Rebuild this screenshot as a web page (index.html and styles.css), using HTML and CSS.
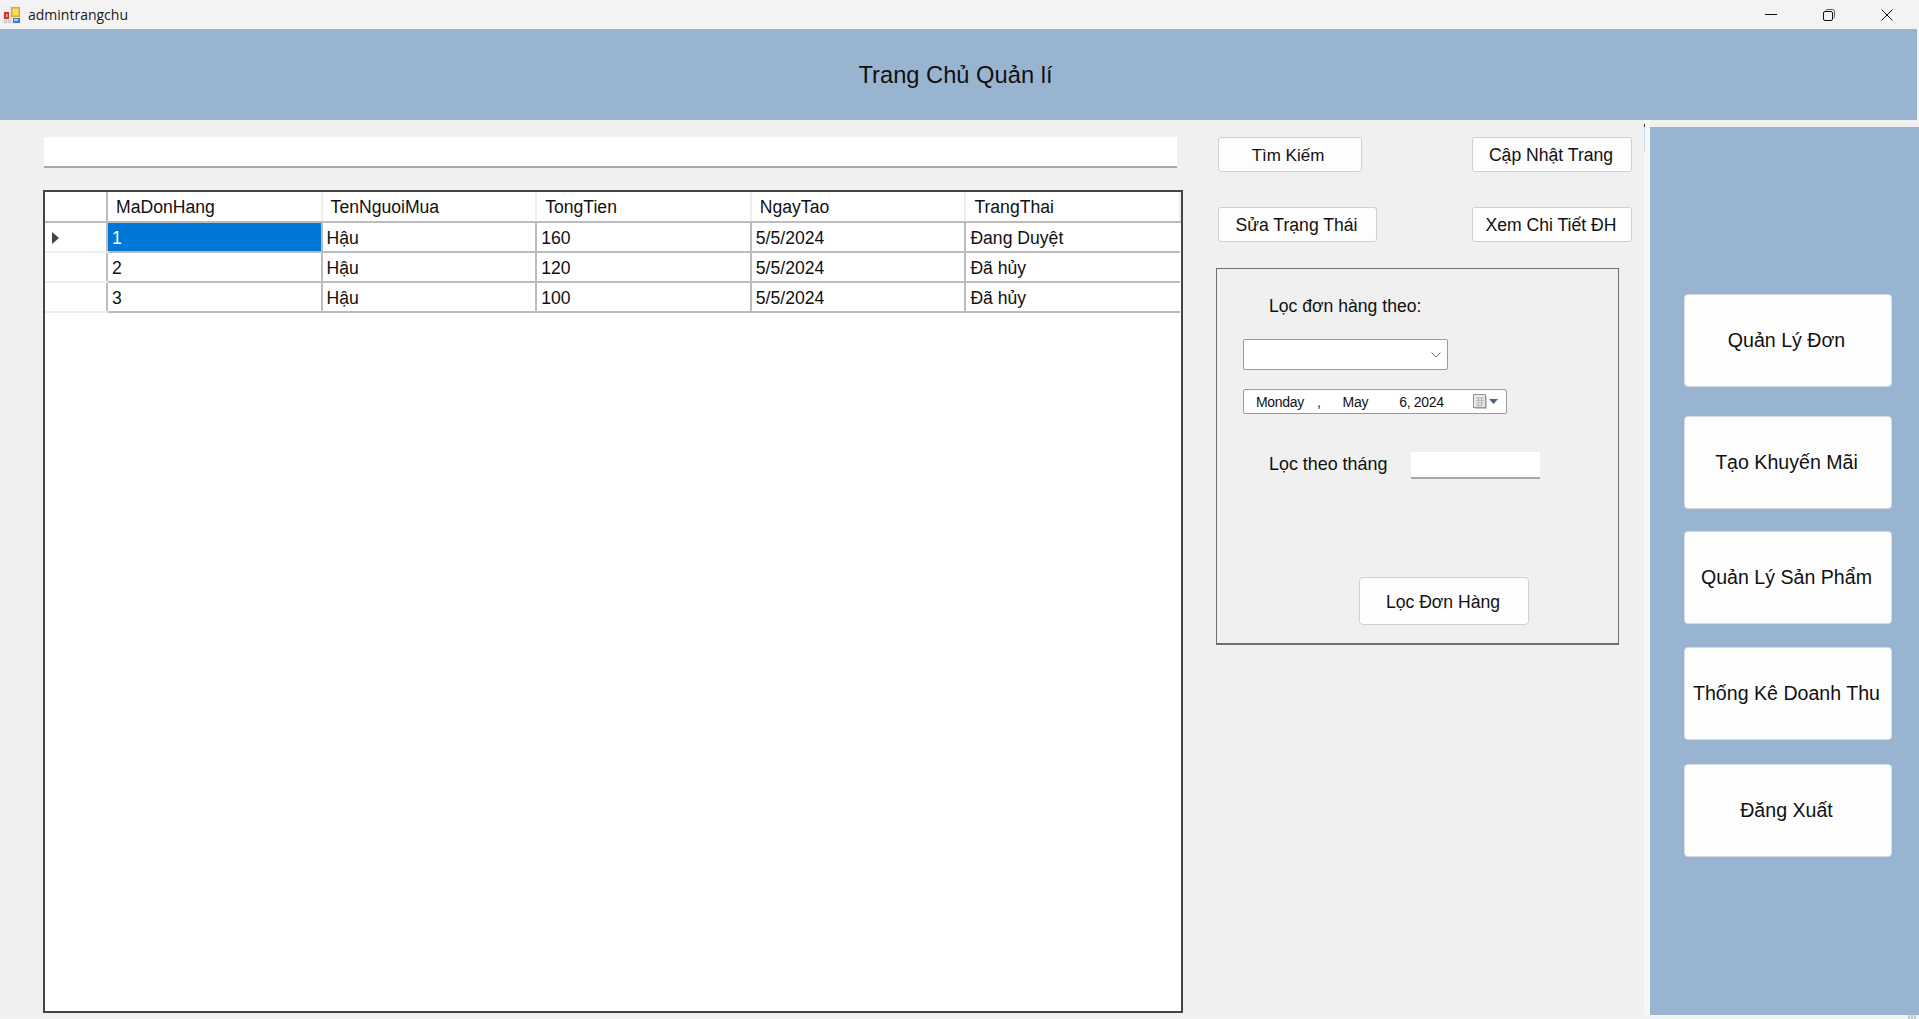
FILE: index.html
```html
<!DOCTYPE html>
<html lang="vi">
<head>
  <meta charset="UTF-8">
  <title>admintrangchu</title>
  <link rel="stylesheet" href="styles.css">
</head>
<body>

  <div class="titlebar">
    <svg class="app-icon" width="18" height="18" viewBox="0 0 18 18">
      <rect x="0.5" y="0.5" width="17" height="17" fill="#e4e4e4"/>
      <rect x="1" y="1" width="5" height="4" fill="#f4f4f4"/>
      <rect x="1" y="6" width="5" height="7" fill="#c9352c"/>
      <rect x="3" y="8" width="1.5" height="3" fill="#f6b0a8"/>
      <rect x="8" y="1" width="9" height="10" fill="#e9ac1c"/>
      <rect x="9.5" y="2.5" width="6" height="7" fill="#f9dc63"/>
      <rect x="10" y="12" width="7" height="5" fill="#3f7fd6"/>
      <rect x="11" y="13" width="4" height="2" fill="#a9c9f1"/>
      <rect x="1" y="14" width="3" height="3" fill="#cfcfcf"/>
      <rect x="5" y="14" width="3" height="3" fill="#cfcfcf"/>
    </svg>
    <span class="app-name">admintrangchu</span>
    <div class="win-buttons">
      <svg width="12" height="12" viewBox="0 0 12 12"><path d="M0 5.5H12" stroke="#111" fill="none"/></svg>
      <svg width="12" height="12" viewBox="0 0 12 12"><rect x="0.5" y="2.5" width="9" height="9" rx="1.5" fill="none" stroke="#111"/><path d="M3 1.5Q3 .5 4.5 .5H9.5Q11.5 .5 11.5 2.5V7.5Q11.5 9 10.5 9" fill="none" stroke="#555"/></svg>
      <svg width="12" height="12" viewBox="0 0 12 12"><path d="M.5 .5L11.5 11.5M11.5 .5L.5 11.5" stroke="#111" fill="none"/></svg>
    </div>
  </div>

  <header class="banner">Trang Chủ Quản lí</header>

  <div class="content">
    <section class="orders">
      <div class="search-box"></div>
      <div class="grid-frame">
        <table class="grid">
          <thead>
            <tr>
              <th class="row-head"></th>
              <th>MaDonHang</th>
              <th>TenNguoiMua</th>
              <th>TongTien</th>
              <th>NgayTao</th>
              <th>TrangThai</th>
            </tr>
          </thead>
          <tbody>
            <tr>
              <td class="row-head"><span class="row-arrow"></span></td>
              <td class="selected">1</td>
              <td>Hậu</td>
              <td>160</td>
              <td>5/5/2024</td>
              <td>Đang Duyệt</td>
            </tr>
            <tr>
              <td class="row-head"></td>
              <td>2</td>
              <td>Hậu</td>
              <td>120</td>
              <td>5/5/2024</td>
              <td>Đã hủy</td>
            </tr>
            <tr>
              <td class="row-head"></td>
              <td>3</td>
              <td>Hậu</td>
              <td>100</td>
              <td>5/5/2024</td>
              <td>Đã hủy</td>
            </tr>
          </tbody>
        </table>
      </div>
    </section>

    <section class="tools">
      <div class="tool-row">
        <button class="btn btn-search">Tìm Kiếm</button>
        <button class="btn btn-wide">Cập Nhật Trang</button>
      </div>
      <div class="tool-row">
        <button class="btn btn-status">Sửa Trạng Thái</button>
        <button class="btn btn-wide">Xem Chi Tiết ĐH</button>
      </div>

      <div class="filter-box">
        <div class="filter-title">Lọc đơn hàng theo:</div>
        <div class="combo">
          <svg width="10" height="6" viewBox="0 0 10 6"><path d="M.5 .5L5 5L9.5 .5" fill="none" stroke="#777"/></svg>
        </div>
        <div class="date-picker">
          <span class="date-day">Monday</span>
          <span class="date-comma">,</span>
          <span class="date-month">May</span>
          <span class="date-rest">6, 2024</span>
          <svg class="date-icon" width="26" height="15" viewBox="0 0 26 15">
            <rect x="0.5" y="0.5" width="12" height="13" fill="#e6e8ea" stroke="#8f959b"/>
            <path d="M3 4H11M3 6.5H11M3 9H11M3 11.5H9M5.5 3V12.5M8.5 3V12.5" stroke="#b3bac1" fill="none"/>
            <path d="M13.5 2V14.5H2" stroke="#c4c4c4" fill="none"/>
            <path d="M16 5H25L20.5 10Z" fill="#4d6185"/>
          </svg>
        </div>
        <div class="month-row">
          <label class="month-label">Lọc theo tháng</label>
          <div class="month-input"></div>
        </div>
        <button class="btn btn-filter">Lọc Đơn Hàng</button>
      </div>
    </section>

    <div class="divider"></div>

    <nav class="sidebar">
      <button class="nav-btn">Quản Lý Đơn</button>
      <button class="nav-btn">Tạo Khuyến Mãi</button>
      <button class="nav-btn">Quản Lý Sản Phẩm</button>
      <button class="nav-btn">Thống Kê Doanh Thu</button>
      <button class="nav-btn">Đăng Xuất</button>
    </nav>
  </div>

  <svg class="size-grip" width="9" height="6" viewBox="0 0 9 6">
    <path d="M1 0V6M4 0V6M7 0V6" stroke="#b4b9bf" stroke-width="1.5" fill="none"/>
  </svg>

</body>
</html>
```

FILE: styles.css
```css
* {
  box-sizing: border-box;
}

body {
  position: relative;
  margin: 0;
  height: 1019px;
  overflow: hidden;
  background: #f2f2f2;
  font-family: "Liberation Sans", Arial, sans-serif;
  font-size: 17.6px;
  color: #111;
}

/* window title */
.titlebar {
  display: flex;
  align-items: center;
  height: 29px;
  padding-left: 3px;
  background: #f3f3f3;
}

.app-name {
  margin-left: 7px;
  font-family: "Open Sans", sans-serif;
  font-size: 14px;
  color: #1a1a1a;
}

.win-buttons {
  display: flex;
  gap: 46px;
  margin-left: auto;
  padding-right: 26px;
}

.banner {
  display: flex;
  align-items: center;
  justify-content: center;
  width: 1917px;
  height: 91px;
  padding: 2px 6px 0 0;
  background: #99b4d1;
  font-size: 23.7px;
}

.content {
  display: flex;
  height: 895px;
  background: #f0f0f0;
}

/* left side */
.orders {
  width: 1183px;
  padding: 17px 0 0 43px;
}

.search-box {
  width: 1133px;
  height: 31px;
  margin-left: 1px;
  background: #fff;
  border-bottom: 2px solid #a8a8a8;
}

.grid-frame {
  width: 1140px;
  height: 823px;
  margin-top: 22px;
  background: #fff;
  border: 2px solid #444;
}

.grid {
  width: 1136px;
  border-collapse: collapse;
  table-layout: fixed;
}

.grid th {
  height: 30px;
  padding: 2px 0 0 8px;
  border-right: 2px solid #eee;
  border-bottom: 2px solid #bcbcbc;
  font-weight: normal;
  text-align: left;
}

.grid td {
  height: 30px;
  padding: 2px 0 0 4px;
  border-right: 2px solid #bcbcbc;
  border-bottom: 2px solid #bcbcbc;
}

.grid th:first-child {
  width: 62px;
  border-right: 2px solid #bcbcbc;
}

.grid td.row-head {
  border-bottom: 2px solid #eee;
}

.grid td:last-child {
  border-right: 0;
}

.grid td.selected {
  background: #0078d7;
  color: #fff;
}

.row-arrow {
  display: block;
  width: 0;
  height: 0;
  margin-left: 3px;
  border-top: 6px solid transparent;
  border-bottom: 6px solid transparent;
  border-left: 7px solid #444;
}

/* middle column */
.tools {
  width: 416px;
  margin-left: 33px;
  padding-top: 17px;
}

.tool-row {
  display: flex;
  justify-content: space-between;
  height: 35px;
  margin: 0 0 35px 2px;
}

.btn {
  height: 35px;
  padding: 2px 2px 0 0;
  background: #fdfdfd;
  border: 1px solid #d0d0d0;
  border-radius: 3px;
  font-family: inherit;
  font-size: 17.6px;
  color: #111;
}

.btn-search {
  width: 144px;
  padding-right: 4px;
  font-size: 17px;
}

.btn-status {
  width: 159px;
}

.btn-wide {
  width: 160px;
}

.filter-box {
  width: 403px;
  height: 377px;
  margin-top: -9px;
  padding: 27px 0 0 26px;
  border: 1px solid #6e6e6e;
  border-bottom-width: 2px;
}

.filter-title {
  margin-left: 26px;
  line-height: 20px;
}

.combo {
  display: flex;
  align-items: center;
  justify-content: flex-end;
  width: 205px;
  height: 31px;
  margin-top: 23px;
  padding: 0 6px 0 0;
  background: #fff;
  border: 1px solid #9a9a9a;
  border-radius: 2px;
}

.date-picker {
  display: flex;
  align-items: center;
  width: 264px;
  height: 25px;
  margin-top: 19px;
  padding-left: 12px;
  background: #fff;
  border: 1px solid #9a9a9a;
  border-radius: 2px;
  font-size: 14px;
  letter-spacing: -0.3px;
}

.date-comma {
  margin-left: 13px;
}

.date-month {
  margin-left: 22px;
}

.date-rest {
  margin-left: 31px;
}

.date-icon {
  margin-left: auto;
  margin-right: 7px;
}

.month-row {
  display: flex;
  align-items: center;
  margin-top: 38px;
  margin-left: 26px;
}

.month-label {
  width: 142px;
  padding-bottom: 2px;
  font-size: 17.9px;
}

.month-input {
  width: 129px;
  height: 27px;
  background: #fff;
  border-bottom: 2px solid #a8a8a8;
}

.btn-filter {
  display: block;
  width: 170px;
  height: 48px;
  margin: 98px 0 0 116px;
  border-radius: 4px;
}

/* right side */
.divider {
  width: 6px;
  margin-left: 12px;
  background: #f7f7f7;
}

.divider::before {
  content: "";
  display: block;
  width: 1px;
  height: 28px;
  margin-top: 4px;
  background: linear-gradient(#333 0 3px, #c9d8ea 3px);
}

.sidebar {
  display: flex;
  flex-direction: column;
  flex: 1;
  margin-top: 7px;
  padding: 167px 0 0 34px;
  background: #99b4d1;
}

.nav-btn {
  width: 208px;
  height: 93px;
  padding: 0 3px 0 0;
  background: #fdfdfd;
  border: 1px solid #d8dce2;
  border-radius: 4px;
  font-family: inherit;
  font-size: 19.6px;
  color: #111;
}

.nav-btn:nth-child(2) {
  margin-top: 29px;
}

.nav-btn:nth-child(3) {
  margin-top: 22px;
}

.nav-btn:nth-child(4) {
  margin-top: 23px;
}

.nav-btn:nth-child(5) {
  margin-top: 24px;
}

.size-grip {
  position: absolute;
  right: 2px;
  bottom: 0;
}
```
